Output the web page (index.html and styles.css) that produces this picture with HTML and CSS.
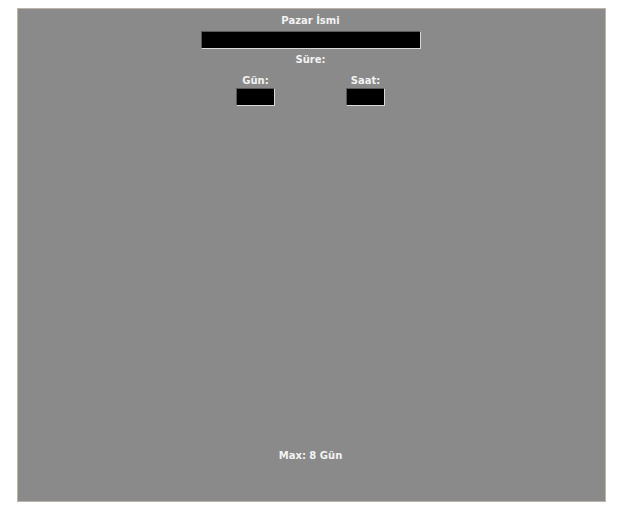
FILE: index.html
```html
<!DOCTYPE html>
<html lang="tr">
<head>
    <meta charset="UTF-8">
    <title>Pazar</title>
    <link rel="stylesheet" href="styles.css">
</head>
<body>
    <div class="panel">
        <div class="label">Pazar İsmi</div>
        <input type="text" class="name-input">
        <div class="label sure">Süre:</div>
        <div class="time-row">
            <div class="time-col">
                <div class="label">Gün:</div>
                <input type="text" class="small-input">
            </div>
            <div class="time-col">
                <div class="label">Saat:</div>
                <input type="text" class="small-input">
            </div>
        </div>
        <div class="label max">Max: 8 Gün</div>
    </div>
</body>
</html>
```

FILE: styles.css
```css
body {
    margin: 0;
    background-color: #ffffff;
    font-family: "DejaVu Sans", Verdana, sans-serif;
}

.panel {
    margin: 8px 0 0 17px;
    width: 589px;
    height: 494px;
    border: 1px solid #bbb4a8;
    background-color: #8a8a8a;
    display: flex;
    flex-direction: column;
    align-items: center;
    padding: 6px 2px 39px 0;
    box-sizing: border-box;
}

.label {
    color: #f2f2f2;
    font-size: 10px;
    font-weight: bold;
    line-height: 12px;
    text-align: center;
}

input {
    margin: 0;
    padding: 0;
    background-color: #000000;
    border: 1px solid;
    border-color: #5a5a5a #d8d8d8 #d8d8d8 #5a5a5a;
    box-sizing: border-box;
    outline: none;
}

.name-input {
    width: 220px;
    height: 18px;
    margin-top: 4px;
}

.sure {
    margin-top: 5px;
}

.time-row {
    display: grid;
    grid-template-columns: 110px 110px;
    margin-top: 9px;
}

.time-col {
    display: flex;
    flex-direction: column;
    align-items: center;
}

.small-input {
    width: 39px;
    height: 18px;
    margin-top: 1px;
}

.max {
    margin-top: auto;
}
```
